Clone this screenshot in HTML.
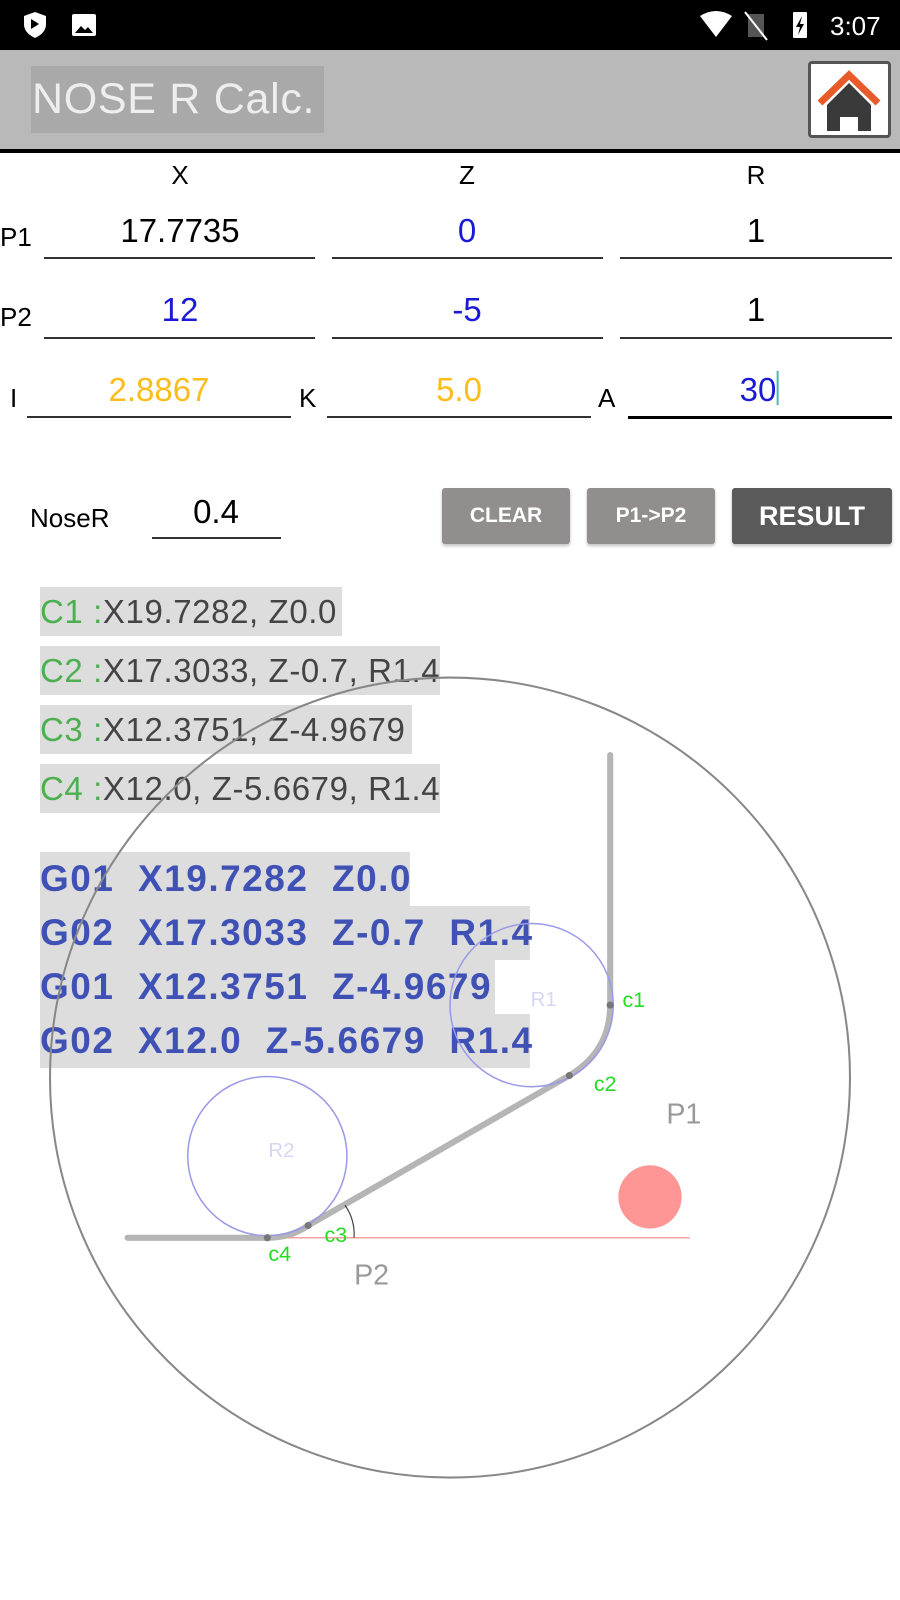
<!DOCTYPE html>
<html><head><meta charset="utf-8"><style>
*{margin:0;padding:0;box-sizing:border-box}
body{width:900px;height:1600px;background:#fff;font-family:"Liberation Sans",sans-serif;position:relative;overflow:hidden}
.a{position:absolute}
.t{position:absolute;text-align:center;font-size:33px;transform:translateX(-50%);white-space:nowrap}
.ln{position:absolute;height:2px;background:#333}
.btn{position:absolute;color:#fff;font-weight:bold;text-align:center;border-radius:3px;box-shadow:0 2px 3px rgba(0,0,0,.25)}
.c{position:absolute;left:40px;height:49px;background:#ddd;font-size:33px;line-height:49px;color:#444;white-space:nowrap;letter-spacing:0.6px}
.c span{color:#4caf50}
.g{position:absolute;left:40px;height:54px;background:#ddd;font-size:37px;font-weight:bold;line-height:54px;color:#3f51b5;white-space:pre;letter-spacing:1.5px}
</style></head><body>
<div class="a" style="left:0;top:0;width:900px;height:50px;background:#000"></div>
<svg class="a" style="left:0;top:0" width="900" height="50">
<path d="M24 16 L35 12 L46 16 V24 C46 31 41 35 35 38 C29 35 24 31 24 24Z" fill="#fff"/><path d="M31 19 L39 24 L31 29Z" fill="#000"/>
<rect x="72" y="14" width="24" height="22" rx="2" fill="#fff"/><path d="M75 33 L81 26 L85 30 L88 27 L93 33Z" fill="#000"/>
<path d="M700 16 Q716 6 732 16 L716 37Z" fill="#fff"/>
<path d="M748 14 H764 V37 H748Z" fill="#555"/><path d="M745 12 L767 40" stroke="#fff" stroke-width="2"/>
<rect x="793" y="12" width="14" height="26" rx="1" fill="#fff"/><path d="M802 16 L796 27 H800 L798 35 L804 24 H800Z" fill="#000"/>
<text x="830" y="35" fill="#fff" font-size="26" font-family="Liberation Sans">3:07</text>
</svg>
<div class="a" style="left:0;top:50px;width:900px;height:99px;background:#bab9b9"></div>
<div class="a" style="left:0;top:149px;width:900px;height:4px;background:#000"></div>
<div class="a" style="left:31px;top:66px;width:293px;height:67px;background:#a9a9a9;color:#eee;font-size:43px;line-height:67px;padding-left:1px;letter-spacing:0.7px;white-space:nowrap">NOSE R Calc.</div>
<div class="a" style="left:808px;top:61px;width:83px;height:77px;background:#fff;border:3px solid #555;border-radius:4px"></div>
<svg class="a" style="left:808px;top:61px" width="83" height="77"><path d="M19 44 L41 22 L63 44 V70 H50 V56 H32 V70 H19Z" fill="#3a3a3a"/><path d="M12 42 L41 14 L70 42" stroke="#e85a2a" stroke-width="7" fill="none"/></svg>

<div class="t" style="left:180px;top:160px;font-size:26px">X</div>
<div class="t" style="left:467px;top:160px;font-size:26px">Z</div>
<div class="t" style="left:756px;top:160px;font-size:26px">R</div>

<div class="a" style="left:0;top:222px;font-size:26px">P1</div>
<div class="t" style="left:180px;top:212px">17.7735</div>
<div class="t" style="left:467px;top:212px;color:#1a1ad6">0</div>
<div class="t" style="left:756px;top:212px">1</div>
<div class="ln" style="left:44px;top:257px;width:271px"></div>
<div class="ln" style="left:332px;top:257px;width:271px"></div>
<div class="ln" style="left:620px;top:257px;width:272px"></div>

<div class="a" style="left:0;top:302px;font-size:26px">P2</div>
<div class="t" style="left:180px;top:291px;color:#1a1ad6">12</div>
<div class="t" style="left:467px;top:291px;color:#1a1ad6">-5</div>
<div class="t" style="left:756px;top:291px">1</div>
<div class="ln" style="left:44px;top:337px;width:271px"></div>
<div class="ln" style="left:332px;top:337px;width:271px"></div>
<div class="ln" style="left:620px;top:337px;width:272px"></div>

<div class="a" style="left:10px;top:383px;font-size:26px">I</div>
<div class="a" style="left:299px;top:383px;font-size:26px">K</div>
<div class="a" style="left:598px;top:383px;font-size:26px">A</div>
<div class="t" style="left:159px;top:371px;color:#fbbc1c">2.8867</div>
<div class="t" style="left:459px;top:371px;color:#fbbc1c">5.0</div>
<div class="t" style="left:759px;top:371px;color:#1a1ad6">30<span style="display:inline-block;width:2px;height:34px;background:#4db6ac;vertical-align:-4px"></span></div>
<div class="ln" style="left:27px;top:416px;width:264px"></div>
<div class="ln" style="left:327px;top:416px;width:264px"></div>
<div class="ln" style="left:628px;top:416px;width:264px;height:3px;background:#000"></div>

<div class="a" style="left:30px;top:503px;font-size:26px">NoseR</div>
<div class="t" style="left:216px;top:493px">0.4</div>
<div class="ln" style="left:152px;top:537px;width:129px"></div>
<div class="btn" style="left:442px;top:488px;width:128px;height:56px;line-height:56px;background:#918e8d;font-size:21px">CLEAR</div>
<div class="btn" style="left:587px;top:488px;width:128px;height:56px;line-height:56px;background:#918e8d;font-size:21px">P1-&gt;P2</div>
<div class="btn" style="left:732px;top:488px;width:160px;height:56px;line-height:56px;background:#5b5a5b;font-size:27px">RESULT</div>

<div class="c" style="top:587px;width:302px"><span>C1 :</span>X19.7282, Z0.0</div>
<div class="c" style="top:646px;width:400px"><span>C2 :</span>X17.3033, Z-0.7, R1.4</div>
<div class="c" style="top:705px;width:372px"><span>C3 :</span>X12.3751, Z-4.9679</div>
<div class="c" style="top:764px;width:400px"><span>C4 :</span>X12.0, Z-5.6679, R1.4</div>

<div class="g" style="top:852px;width:370px">G01  X19.7282  Z0.0</div>
<div class="g" style="top:906px;width:490px">G02  X17.3033  Z-0.7  R1.4</div>
<div class="g" style="top:960px;width:455px">G01  X12.3751  Z-4.9679</div>
<div class="g" style="top:1014px;width:490px">G02  X12.0  Z-5.6679  R1.4</div>

<svg class="a" style="left:0;top:0" width="900" height="1600" viewBox="0 0 882 1568" font-family="Liberation Sans">
<circle cx="441" cy="1056" r="392" fill="none" stroke="#888" stroke-width="2"/>
<line x1="262" y1="1213" x2="676" y2="1213" stroke="#f4a0a0" stroke-width="1.5"/>
<path d="M598 740 V985 Q598 1030 558 1054 L302 1201 Q285 1213 262 1213 H125" fill="none" stroke="#b5b5b5" stroke-width="6" stroke-linecap="round"/>
<circle cx="521" cy="985" r="80" fill="none" stroke="#9a9ae8" stroke-width="1.5"/>
<circle cx="262" cy="1133" r="78" fill="none" stroke="#9a9ae8" stroke-width="1.5"/>
<path d="M338 1181 Q348 1195 347 1213" fill="none" stroke="#444" stroke-width="1.2"/>
<circle cx="637" cy="1173" r="31" fill="#ff9696"/>
<g fill="#777"><circle cx="598" cy="985" r="3.5"/><circle cx="558" cy="1054" r="3.5"/><circle cx="302" cy="1201" r="3.5"/><circle cx="262" cy="1213" r="3.5"/></g>
<g fill="#22dd22" font-size="21"><text x="610" y="987">c1</text><text x="582" y="1069">c2</text><text x="318" y="1217">c3</text><text x="263" y="1236">c4</text></g>
<g fill="#999" font-size="28"><text x="653" y="1101">P1</text><text x="347" y="1259">P2</text></g>
<g fill="#d6d6f4" font-size="20"><text x="520" y="986">R1</text><text x="263" y="1134">R2</text></g>
</svg>
</body></html>
